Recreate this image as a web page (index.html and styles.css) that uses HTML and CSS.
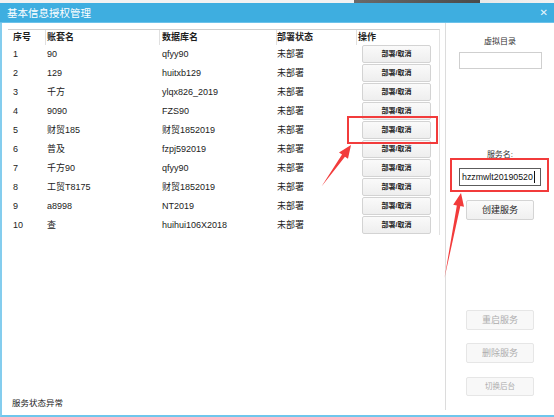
FILE: index.html
```html
<!DOCTYPE html>
<html lang="zh-CN">
<head>
<meta charset="utf-8">
<title>基本信息授权管理</title>
<link rel="stylesheet" href="styles.css">
</head>
<body>
<div class="window">
  <div class="topstrip"></div>
  <div class="titlebar">
    <span class="title">基本信息授权管理</span>
    <span class="close">✕</span>
  </div>
  <div class="body">
    <div class="left">
      <div class="grid">
        <div class="row head">
          <div class="c1">序号</div><div class="c2">账套名</div><div class="c3">数据库名</div><div class="c4">部署状态</div><div class="c5">操作</div>
        </div>
        <div class="row"><div class="c1">1</div><div class="c2">90</div><div class="c3">qfyy90</div><div class="c4">未部署</div><div class="c5"><span class="gbtn">部署/取消</span></div></div>
        <div class="row"><div class="c1">2</div><div class="c2">129</div><div class="c3">huitxb129</div><div class="c4">未部署</div><div class="c5"><span class="gbtn">部署/取消</span></div></div>
        <div class="row"><div class="c1">3</div><div class="c2">千方</div><div class="c3">ylqx826_2019</div><div class="c4">未部署</div><div class="c5"><span class="gbtn">部署/取消</span></div></div>
        <div class="row"><div class="c1">4</div><div class="c2">9090</div><div class="c3">FZS90</div><div class="c4">未部署</div><div class="c5"><span class="gbtn">部署/取消</span></div></div>
        <div class="row"><div class="c1">5</div><div class="c2">财贸185</div><div class="c3">财贸1852019</div><div class="c4">未部署</div><div class="c5"><span class="gbtn">部署/取消</span></div></div>
        <div class="row"><div class="c1">6</div><div class="c2">普及</div><div class="c3">fzpj592019</div><div class="c4">未部署</div><div class="c5"><span class="gbtn">部署/取消</span></div></div>
        <div class="row"><div class="c1">7</div><div class="c2">千方90</div><div class="c3">qfyy90</div><div class="c4">未部署</div><div class="c5"><span class="gbtn">部署/取消</span></div></div>
        <div class="row"><div class="c1">8</div><div class="c2">工贸T8175</div><div class="c3">财贸1852019</div><div class="c4">未部署</div><div class="c5"><span class="gbtn">部署/取消</span></div></div>
        <div class="row"><div class="c1">9</div><div class="c2">a8998</div><div class="c3">NT2019</div><div class="c4">未部署</div><div class="c5"><span class="gbtn">部署/取消</span></div></div>
        <div class="row"><div class="c1">10</div><div class="c2">查</div><div class="c3">huihui106X2018</div><div class="c4">未部署</div><div class="c5"><span class="gbtn">部署/取消</span></div></div>
      </div>
      <div class="status">服务状态异常</div>
    </div>
    <div class="right">
      <div class="label vlabel">虚拟目录</div>
      <div class="input vinput"></div>
      <div class="label slabel">服务名:</div>
      <div class="input sinput"><span class="val">hzzmwlt20190520</span><span class="caret"></span></div>
      <div class="btn create">创建服务</div>
      <div class="btn dis restart">重启服务</div>
      <div class="btn dis del">删除服务</div>
      <div class="btn dis small sw">切换后台</div>
    </div>
  </div>
  <div class="mark mark1"></div>
  <div class="mark mark2"></div>
  <svg class="arrows" width="554" height="417" viewBox="0 0 554 417">
    <polygon points="321.5,186.5 344.97,156.64 347.99,158.78 351,145 339.01,152.42 342.03,154.56" fill="#f23b3b"/>
    <polygon points="444.5,278 460.37,206.11 464.01,206.8 461,193 453.19,204.76 456.83,205.45" fill="#f23b3b"/>
  </svg>
</div>
</body>
</html>
```

FILE: styles.css
```css
html, body {
  margin: 0;
  padding: 0;
  background: #ffffff;
}
body {
  font-family: "Liberation Sans", "Noto Sans CJK SC", sans-serif;
  color: #222;
}
.window {
  position: relative;
  width: 554px;
  height: 417px;
  display: flex;
  flex-direction: column;
  overflow: hidden;
  background: #fff;
}
.topstrip {
  height: 3px;
  background: linear-gradient(to right, #f2f2f2 0, #f2f2f2 354px, #6a6a6a 354px, #4a4a4a 480px, #e8e8e8 480px, #f2f2f2 554px);
}
.titlebar {
  height: 19px;
  background: #3eaee0;
  border-bottom: 1px solid #6cc2ea;
  display: flex;
  align-items: center;
  justify-content: space-between;
  padding: 0 6px 0 7px;
  color: #fff;
}
.title {
  font-size: 10.5px;
  line-height: 19px;
  padding-top: 1px;
}
.close {
  font-size: 10px;
  line-height: 19px;
  color: #e8f6fd;
  font-family: "DejaVu Sans", sans-serif;
}
.body {
  flex: 1;
  display: flex;
  border-left: 2px solid #84cdee;
  border-bottom: 2px solid #6fc6ec;
}
.left {
  width: 443px;
  display: flex;
  flex-direction: column;
  justify-content: space-between;
  padding: 6px 0 0 6px;
  box-sizing: border-box;
}
.grid {
  width: 432px;
  border-top: 1px solid #cfcfcf;
  border-right: 1px solid #e2e2e2;
  box-sizing: border-box;
  font-size: 9px;
}
.row {
  display: grid;
  grid-template-columns: 37px 114px 117px 80px 83px;
  height: 19px;
  line-height: 18px;
  white-space: nowrap;
}
.row.head {
  height: 15px;
  line-height: 15px;
  font-weight: bold;
  color: #1f1f1f;
}
.row > div {
  box-sizing: border-box;
  overflow: hidden;
}
.c1 { padding-left: 5px; }
.c2 { padding-left: 2px; }
.c3 { padding-left: 3px; }
.c4 { padding-left: 1px; }
.c5 { padding-left: 2px; }
.head .c2, .head .c3, .head .c4, .head .c5 {
  border-left: 1px solid #e0e0e0;
  padding-left: 1px;
}
.head .c3 { padding-left: 2px; }
.head .c4 { padding-left: 0; }
.row:not(.head) .c5 {
  padding-left: 6px;
}
.gbtn {
  display: block;
  width: 69px;
  height: 18px;
  box-sizing: border-box;
  border: 1px solid #d3d3d3;
  border-radius: 2px;
  background: linear-gradient(#fafafa, #eeeeee);
  text-align: center;
  font-size: 7px;
  font-weight: bold;
  line-height: 16px;
  color: #222;
}
.status {
  font-size: 8.5px;
  line-height: 12px;
  padding-left: 4px;
  margin-bottom: 6px;
}
.right {
  flex: 1;
  border-left: 1px solid #dcdcdc;
  margin-bottom: 5px;
  display: flex;
  flex-direction: column;
  align-items: center;
}
.label {
  font-size: 8px;
  line-height: 12px;
  color: #333;
}
.vlabel { margin-top: 13px; }
.input {
  box-sizing: border-box;
  border: 1px solid #cfcfcf;
  background: #fff;
}
.vinput {
  width: 83px;
  height: 17px;
  margin-top: 4px;
}
.slabel { margin-top: 80px; }
.sinput {
  width: 82px;
  height: 18px;
  margin-top: 7px;
  border-color: #5c5c5c;
  display: flex;
  align-items: center;
  padding-left: 2px;
  font-size: 8.8px;
  color: #111;
  white-space: nowrap;
}
.caret {
  display: inline-block;
  width: 1px;
  height: 12px;
  background: #111;
  margin-left: 1px;
}
.btn {
  width: 68px;
  height: 20px;
  box-sizing: border-box;
  border: 1px solid #d4d4d4;
  border-radius: 2px;
  background: linear-gradient(#fbfbfb, #f0f0f0);
  font-size: 9px;
  line-height: 18px;
  text-align: center;
  color: #222;
}
.create { margin-top: 14px; }
.dis {
  border-color: #e6e6e6;
  background: #f8f8f8;
  color: #adadad;
}
.restart { margin-top: 90px; }
.del { margin-top: 13px; }
.sw { margin-top: 14px; height: 19px; line-height: 17px; }
.small { font-size: 7.5px; }
.mark {
  position: absolute;
  border: 2px solid #f23b3b;
  box-sizing: border-box;
}
.mark1 {
  left: 347px;
  top: 116px;
  width: 91px;
  height: 28px;
}
.mark2 {
  left: 450px;
  top: 158px;
  width: 99px;
  height: 34px;
}
.arrows {
  position: absolute;
  left: 0;
  top: 0;
  pointer-events: none;
}
```
